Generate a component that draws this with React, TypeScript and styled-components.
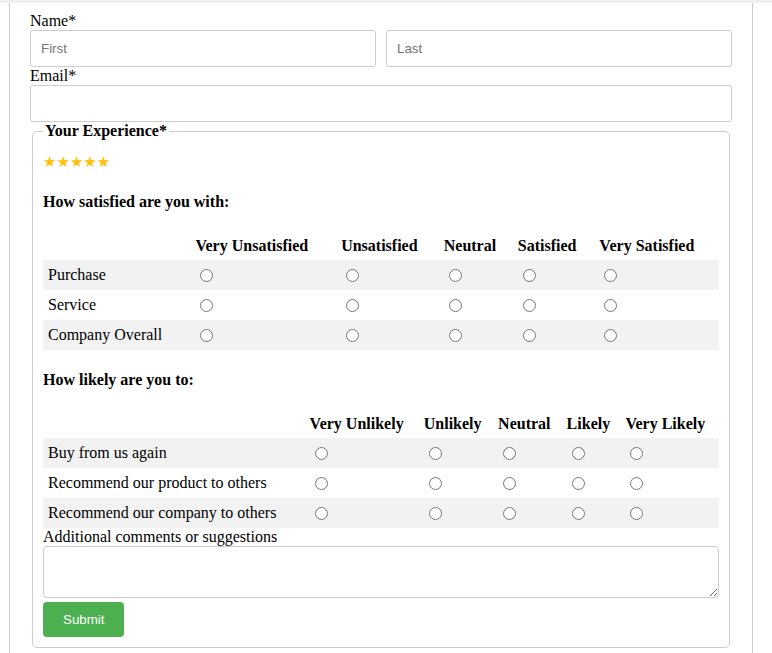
import styled, { createGlobalStyle } from "styled-components";

const GlobalStyle = createGlobalStyle`
  body {
    margin: 0;
    background: #fff;
    font-family: "Liberation Serif", "Times New Roman", serif;
    font-size: 16px;
    color: #000;
  }
`;

const satisfaction = ["Very Unsatisfied", "Unsatisfied", "Neutral", "Satisfied", "Very Satisfied"];
const satisfactionRows = ["Purchase", "Service", "Company Overall"];
const likelihood = ["Very Unlikely", "Unlikely", "Neutral", "Likely", "Very Likely"];
const likelihoodRows = [
  "Buy from us again",
  "Recommend our product to others",
  "Recommend our company to others",
];

export default function App() {
  return (
    <>
      <GlobalStyle />
      <TopStrip />
      <Page>
        <form>
          <Label>Name*</Label>
          <NameRow>
            <TextInput type="text" placeholder="First" />
            <TextInput type="text" placeholder="Last" />
          </NameRow>
          <Label>Email*</Label>
          <TextInput type="email" />
          <Experience>
            <Legend>Your Experience*</Legend>
            <Stars>★★★★★</Stars>
            <SectionTitle>How satisfied are you with:</SectionTitle>
            <RatingTable
              name="sat"
              columns={satisfaction}
              rows={satisfactionRows}
            />
            <SectionTitle>How likely are you to:</SectionTitle>
            <RatingTable name="like" columns={likelihood} rows={likelihoodRows} />
            <Label>Additional comments or suggestions</Label>
            <Comments />
            <SubmitButton type="button">Submit</SubmitButton>
          </Experience>
        </form>
      </Page>
    </>
  );
}

function RatingTable({
  name,
  columns,
  rows,
}: {
  name: string;
  columns: string[];
  rows: string[];
}) {
  return (
    <Table>
      <thead>
        <tr>
          <th></th>
          {columns.map((c) => (
            <th key={c}>{c}</th>
          ))}
        </tr>
      </thead>
      <tbody>
        {rows.map((r, i) => (
          <tr key={r}>
            <td>{r}</td>
            {columns.map((c) => (
              <td key={c}>
                <input type="radio" name={`${name}-${i}`} />
              </td>
            ))}
          </tr>
        ))}
      </tbody>
    </Table>
  );
}

const TopStrip = styled.div`
  height: 3px;
  background: #efefef;
`;

const Page = styled.div`
  margin-left: 9px;
  width: 702px;
  padding: 9px 20px 20px;
  border-left: 1px solid #ccc;
  border-right: 1px solid #ccc;
  min-height: 640px;
`;

const Label = styled.label`
  display: block;
  line-height: 18px;
`;

const NameRow = styled.div`
  display: flex;
  gap: 10px;
`;

const TextInput = styled.input`
  display: block;
  width: 100%;
  box-sizing: border-box;
  height: 37px;
  padding: 10px;
  border: 1px solid #ccc;
  border-radius: 3px;
  font-family: "Liberation Sans", Arial, sans-serif;
  font-size: 13.333px;
  outline: none;

  &::placeholder {
    color: #757575;
  }
`;

const Experience = styled.fieldset`
  margin: 0 2px;
  padding: 10px;
  border: 1px solid #ccc;
  border-radius: 5px;
`;

const Legend = styled.legend`
  padding: 0 2px;
  font-weight: bold;
  line-height: 18px;
`;

const Stars = styled.div`
  color: #ffc107;
  font-family: "DejaVu Sans", sans-serif;
  font-size: 15px;
  line-height: 19px;
  padding-top: 3px;
`;

const SectionTitle = styled.h4`
  margin: 21px 0;
  font-size: 16px;
  line-height: 18px;
`;

const Table = styled.table`
  width: 100%;
  border-collapse: collapse;

  th,
  td {
    padding: 5px;
    text-align: left;
    line-height: 18px;
  }

  td {
    height: 20px;
  }

  input {
    margin: 3px 3px 0 5px;
    vertical-align: -1px;
  }

  tbody tr:nth-child(odd) {
    background: #f2f2f2;
  }
`;

const Comments = styled.textarea`
  display: block;
  width: 100%;
  box-sizing: border-box;
  height: 52px;
  margin: 0 0 4px;
  border: 1px solid #ccc;
  border-radius: 4px;
  font-family: "Liberation Sans", Arial, sans-serif;
`;

const SubmitButton = styled.button`
  display: block;
  padding: 10px 20px;
  border: none;
  border-radius: 4px;
  background: #4caf50;
  color: #fff;
  font-family: "Liberation Sans", Arial, sans-serif;
  font-size: 13.333px;
  line-height: 15px;
  cursor: pointer;
`;
